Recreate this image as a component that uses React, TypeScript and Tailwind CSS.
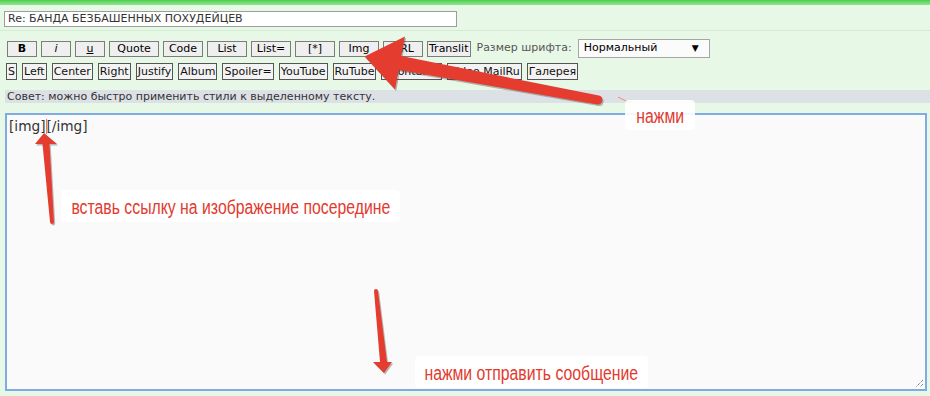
import React from "react";

const row1 = [
  { t: "B", w: "w-[30px]", cls: "font-bold" },
  { t: "i", w: "w-[30px]", cls: "italic" },
  { t: "u", w: "w-[30px]", cls: "underline" },
  { t: "Quote", w: "w-[50px]", cls: "" },
  { t: "Code", w: "w-[40px]", cls: "" },
  { t: "List", w: "w-[40px]", cls: "" },
  { t: "List=", w: "w-[40px]", cls: "" },
  { t: "[*]", w: "w-[40px]", cls: "" },
  { t: "Img", w: "w-[40px]", cls: "" },
  { t: "URL", w: "w-[40px]", cls: "" },
];

const row2 = [
  "S",
  "Left",
  "Center",
  "Right",
  "Justify",
  "Album",
  "Spoiler=",
  "YouTube",
  "RuTube",
  "VKontakte",
  "Video MailRu",
  "Галерея",
];

function Arrows() {
  const big =
    "M 598.83 95.58 L 401.29 56.12 L 404.97 36.46 L 364.6 56.4 L 395.03 89.54 L 398.71 69.88 L 597.17 104.42 A 4.5 4.5 0 0 0 598.83 95.58 Z";
  const left =
    "M 50 222 L 42.5 144 L 35 144 L 44 133 L 57 144 L 49.5 144 L 54 222 A 2 2 0 0 1 50 222 Z";
  const right =
    "M 374 291 L 380 362 L 373 362 L 384 373 L 392 362 L 387 362 L 378 291 A 2 2 0 0 0 374 291 Z";
  return (
    <svg
      className="absolute left-0 top-0 pointer-events-none"
      width="930"
      height="396"
      viewBox="0 0 930 396"
    >
      <g transform="translate(1.2 1.6)" fill="rgba(60,60,60,0.35)">
        <path d={big} />
        <path d={left} />
        <path d={right} />
      </g>
      <g fill="#e43d30">
        <path d={big} />
        <path d={left} />
        <path d={right} />
      </g>
      <line x1="618" y1="97" x2="630" y2="103" stroke="#f08a80" strokeWidth="1" />
      <line x1="62" y1="193" x2="66" y2="205" stroke="#f4aaa2" strokeWidth="1" />
    </svg>
  );
}

function Note({ text, box }: { text: string; box: string }) {
  return (
    <div
      className={`absolute rounded-[4px] flex items-center justify-center font-['Liberation_Sans',Arial,sans-serif] text-[20px] leading-none text-[#e23a2e] ${box}`}
    >
      <span className="inline-block whitespace-nowrap scale-x-[0.79] pt-[1px]">{text}</span>
    </div>
  );
}

export default function App() {
  return (
    <div className="relative w-[930px] h-[396px] overflow-hidden bg-[#e7f8e7] font-['DejaVu_Sans',Verdana,sans-serif] text-[11px] text-[#222]">
      <div className="h-[5px] bg-gradient-to-b from-[#4ccf4c] to-[#8fe48f]" />
      <div className="pt-[6px] pb-[3px] pl-[4px] border-b border-[#d2ecd2]">
        <div className="w-[453px] h-[16px] border border-[#9c9c9c] bg-white pl-[3px] leading-[14px] text-[#333]">
          Re: БАНДА БЕЗБАШЕННЫХ ПОХУДЕЙЦЕВ
        </div>
      </div>

      <div className="mt-[8px] h-[19px] flex items-center pl-[7px] gap-[4px]">
        {row1.map((b) => (
          <div
            key={b.t}
            className={`${b.w} h-[16px] border border-[#7c7c7c] bg-[#efefef] flex items-center justify-center leading-none text-black ${b.cls}`}
          >
            {b.t}
          </div>
        ))}
        <div className="h-[16px] border border-[#7c7c7c] bg-[#efefef] px-[1px] flex items-center leading-none text-black">
          Translit
        </div>
        <span className="ml-[2px] text-[#555]">Размер шрифта:</span>
        <div className="ml-[2px] w-[132px] h-[19px] border border-[#a6a6a6] bg-[#fbfbfb] flex items-center justify-between pl-[5px] pr-[10px] text-black">
          <span>Нормальный</span>
          <span className="text-[9px]">▼</span>
        </div>
      </div>

      <div className="mt-[5px] h-[17px] flex items-center pl-[6px] gap-[5px]">
        {row2.map((t) => (
          <div
            key={t}
            className="h-[17px] border border-[#555] bg-[#f3f3f3] px-[1px] flex items-center leading-none text-[#111]"
          >
            {t}
          </div>
        ))}
      </div>

      <div className="mt-[10px] ml-[5px] h-[13px] bg-[#dce1e5] pl-[2px] leading-[13px] text-[#333]">
        Совет: можно быстро применить стили к выделенному тексту.
      </div>

      <div className="relative mt-[10px] ml-[5px] w-[922px] h-[278px] border-2 border-[#7eaae6] bg-[#fafafa] pl-[2px] pt-[3px] text-[13.7px] leading-[16px] text-[#333]">
        [img]<span className="inline-block w-[1px] h-[15px] align-[-3px] bg-[#e87a6e]" />[/img]
        <svg className="absolute right-[1px] bottom-[1px]" width="11" height="11" viewBox="0 0 11 11">
          <path d="M 10 3 L 3 10 M 10 7 L 7 10" stroke="#555" strokeWidth="1" strokeDasharray="1 1" />
        </svg>
      </div>

      <Arrows />

      <Note text="нажми" box="left-[625px] top-[100px] w-[70px] h-[30px] bg-white/90" />
      <Note text="вставь ссылку на изображение посередине" box="left-[61px] top-[190px] w-[339px] h-[32px] bg-white" />
      <Note text="нажми отправить сообщение" box="left-[415px] top-[356px] w-[233px] h-[32px] bg-white" />
    </div>
  );
}
